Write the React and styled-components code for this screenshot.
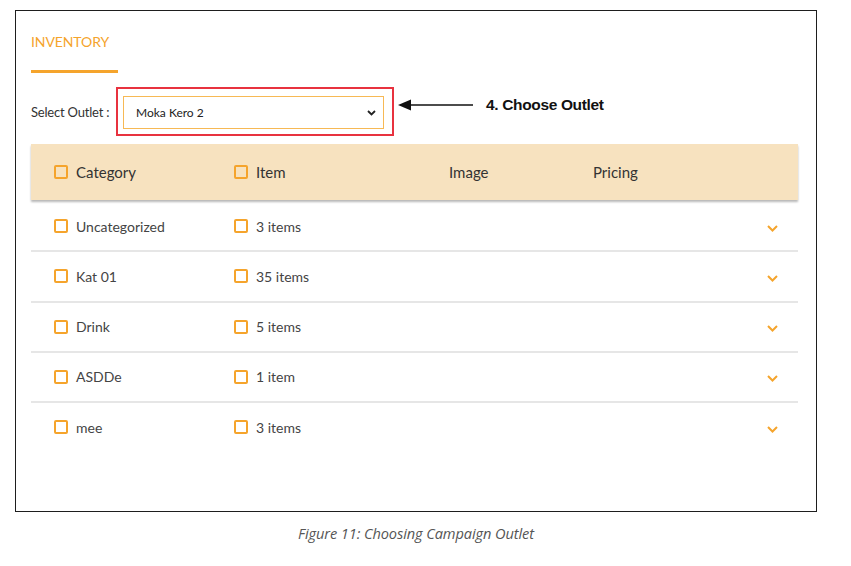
import React from "react";
import styled, { createGlobalStyle } from "styled-components";

const Global = createGlobalStyle`
  html, body { margin: 0; padding: 0; background: #ffffff; }
  body { font-family: "Lato", "Open Sans", sans-serif; }
  * { box-sizing: border-box; }
`;

const Page = styled.div`
  width: 851px;
  height: 566px;
  padding: 10px 0 0 15px;
  display: flex;
  flex-direction: column;
`;

const Frame = styled.div`
  width: 802px;
  height: 502px;
  border: 1px solid #1e1e1e;
  padding: 0 18px 0 15px;
  display: flex;
  flex-direction: column;
`;

const Tab = styled.div`
  margin-top: 21px;
  width: 87px;
  padding-bottom: 18px;
  border-bottom: 3px solid #f5a42c;
  color: #f5a42c;
  font-size: 14px;
  line-height: 20px;
  letter-spacing: -0.1px;
`;

const OutletRow = styled.div`
  margin-top: 14px;
  display: flex;
  align-items: center;
`;

const Label = styled.span`
  font-size: 13px;
  color: #333;
  width: 85px;
  letter-spacing: -0.2px;
`;

const Highlight = styled.div`
  border: 2px solid #e8323f;
  padding: 7px 8px 5px 5px;
`;

const SelectBox = styled.div`
  width: 261px;
  height: 33px;
  border: 1px solid #f7b955;
  display: flex;
  align-items: center;
  justify-content: space-between;
  padding: 0 7px 0 12px;
  font-size: 12px;
  color: #222;
`;

const Annotation = styled.div`
  display: flex;
  align-items: center;
  align-self: flex-start;
  margin-top: 9px;
  margin-left: 4px;
  gap: 13px;
`;

const AnnotText = styled.span`
  font-family: "Liberation Sans", Arial, sans-serif;
  font-weight: bold;
  font-size: 15.5px;
  color: #111;
  letter-spacing: -0.35px;
`;

const Table = styled.div`
  margin-top: 8px;
  display: flex;
  flex-direction: column;
`;

const HeaderRow = styled.div`
  height: 56px;
  background: #f7e2bf;
  box-shadow: 0 2px 2px rgba(0, 0, 0, 0.28);
  display: grid;
  grid-template-columns: 180px 215px 144px 1fr;
  align-items: center;
  padding-left: 23px;
  font-size: 15px;
  color: #333;
  position: relative;
  z-index: 1;
`;

const Row = styled.div`
  height: ${(p) => (p.$last ? "48.25px" : "50.25px")};
  border-bottom: ${(p) => (p.$last ? "none" : "2px solid #e6e6e6")};
  display: grid;
  grid-template-columns: 180px 215px 144px 1fr auto;
  align-items: center;
  padding: 0 20px 0 23px;
  font-size: 14px;
  color: #444;
  margin-top: ${(p) => (p.$first ? "2px" : "0")};
`;

const Cell = styled.div`
  display: flex;
  align-items: center;
  gap: 8px;
`;

const Check = styled.span`
  width: 14px;
  height: 14px;
  border: 2px solid #f5a42c;
  border-radius: 2px;
  display: inline-block;
  flex: none;
`;

const ChevronWrap = styled.span`
  display: flex;
  margin-top: 4px;
`;

const Caption = styled.div`
  width: 802px;
  text-align: center;
  margin-top: 11px;
  font-family: "Open Sans", sans-serif;
  font-size: 14.6px;
  font-style: italic;
  font-weight: 400;
  color: #555;
  letter-spacing: -0.1px;
`;

const SmallChevron = () => (
  <svg width="9" height="6" viewBox="0 0 9 6">
    <path d="M1 1 L4.5 4.5 L8 1" fill="none" stroke="#222" strokeWidth="1.8" />
  </svg>
);

const OrangeChevron = () => (
  <ChevronWrap>
    <svg width="11" height="7" viewBox="0 0 11 7">
      <path d="M1 1 L5.5 5.5 L10 1" fill="none" stroke="#f5a42c" strokeWidth="2" />
    </svg>
  </ChevronWrap>
);

const Arrow = () => (
  <svg width="75" height="12" viewBox="0 0 75 12">
    <path d="M0 6 L13 0.5 L13 11.5 Z" fill="#111" />
    <line x1="12" y1="6" x2="75" y2="6" stroke="#111" strokeWidth="1.5" />
  </svg>
);

const rows = [
  ["Uncategorized", "3 items"],
  ["Kat 01", "35 items"],
  ["Drink", "5 items"],
  ["ASDDe", "1 item"],
  ["mee", "3 items"],
];

export default function App() {
  return (
    <>
      <Global />
      <Page>
        <Frame>
          <Tab>INVENTORY</Tab>
          <OutletRow>
            <Label>Select Outlet :</Label>
            <Highlight>
              <SelectBox>
                <span>Moka Kero 2</span>
                <SmallChevron />
              </SelectBox>
            </Highlight>
            <Annotation>
              <Arrow />
              <AnnotText>4. Choose Outlet</AnnotText>
            </Annotation>
          </OutletRow>
          <Table>
            <HeaderRow>
              <Cell>
                <Check />
                Category
              </Cell>
              <Cell>
                <Check />
                Item
              </Cell>
              <Cell>Image</Cell>
              <Cell>Pricing</Cell>
            </HeaderRow>
            {rows.map(([cat, items], i) => (
              <Row key={cat} $first={i === 0} $last={i === rows.length - 1}>
                <Cell>
                  <Check />
                  {cat}
                </Cell>
                <Cell>
                  <Check />
                  {items}
                </Cell>
                <Cell />
                <Cell />
                <OrangeChevron />
              </Row>
            ))}
          </Table>
        </Frame>
        <Caption>Figure 11: Choosing Campaign Outlet</Caption>
      </Page>
    </>
  );
}
